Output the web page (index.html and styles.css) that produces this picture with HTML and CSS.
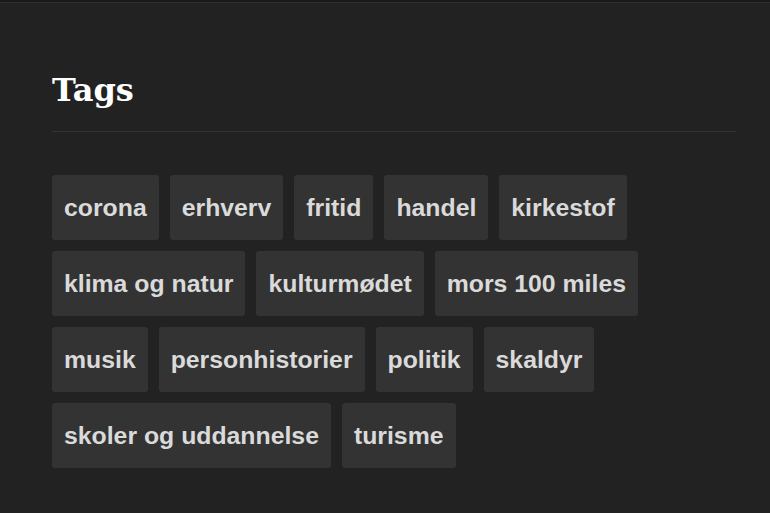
FILE: index.html
```html
<!DOCTYPE html>
<html lang="da">
<head>
    <meta charset="UTF-8">
    <meta name="viewport" content="width=device-width, initial-scale=1.0">
    <title>Tags</title>
    <link rel="stylesheet" href="styles.css">
</head>
<body>
    <div class="widget">
        <h2 class="widget-title">Tags</h2>
        <div class="tag-cloud">
            <a class="tag" href="#">corona</a>
            <a class="tag" href="#">erhverv</a>
            <a class="tag" href="#">fritid</a>
            <a class="tag" href="#">handel</a>
            <a class="tag" href="#">kirkestof</a>
            <a class="tag" href="#">klima og natur</a>
            <a class="tag" href="#">kulturmødet</a>
            <a class="tag" href="#">mors 100 miles</a>
            <a class="tag" href="#">musik</a>
            <a class="tag" href="#">personhistorier</a>
            <a class="tag" href="#">politik</a>
            <a class="tag" href="#">skaldyr</a>
            <a class="tag" href="#">skoler og uddannelse</a>
            <a class="tag" href="#">turisme</a>
        </div>
    </div>
</body>
</html>
```
FILE: styles.css
```css
html {
    background: #222;
}
body {
    margin: 0;
    min-height: 513px;
    background: #222;
    border-top: 2px solid #1a1a1a;
    box-shadow: inset 0 1px 0 #2e2e2e;
    font-family: "Liberation Sans", Arial, sans-serif;
}
.widget {
    width: 684px;
    padding: 68px 0 0 52px;
}
.widget-title {
    margin: 0;
    padding-bottom: 20px;
    border-bottom: 1px solid #353535;
    font-family: "DejaVu Serif", Georgia, serif;
    font-size: 32px;
    font-weight: bold;
    color: #fff;
    line-height: 41px;
}
.tag-cloud {
    display: flex;
    flex-wrap: wrap;
    gap: 11px;
    margin-top: 43px;
}
.tag {
    display: block;
    background: #333;
    color: #dadada;
    border-radius: 3px;
    padding: 12px 12px;
    font-size: 24.8px;
    font-weight: bold;
    font-kerning: none;
    line-height: 41px;
    text-decoration: none;
}
```
